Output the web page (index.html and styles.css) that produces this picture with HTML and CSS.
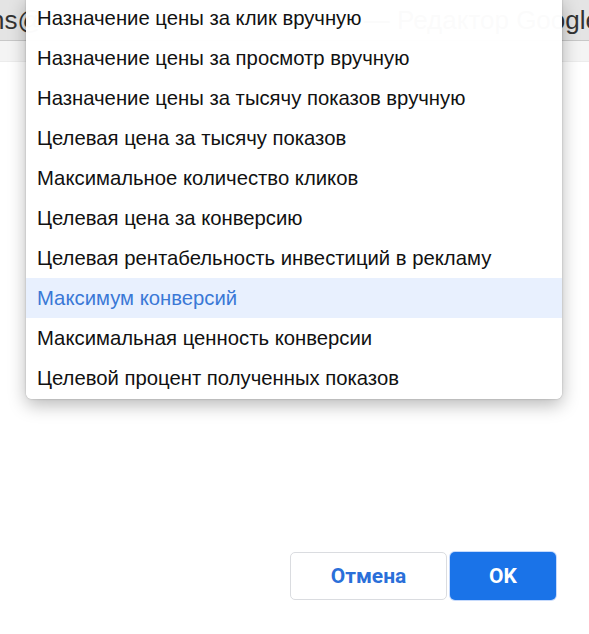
FILE: index.html
```html
<!DOCTYPE html>
<html lang="ru">
<head>
  <meta charset="UTF-8" />
  <meta name="viewport" content="width=device-width, initial-scale=1.0">
  <title>Стратегия назначения ставок</title>
  <link rel="stylesheet" href="styles.css">
</head>
<body>
  <div class="titlebar">
    <span class="title-left">ns@</span>
    <span class="title-right">— Редактор Google</span>
  </div>
  <div class="sheet"></div>

  <ul class="menu">
    <li>Назначение цены за клик вручную</li>
    <li>Назначение цены за просмотр вручную</li>
    <li>Назначение цены за тысячу показов вручную</li>
    <li>Целевая цена за тысячу показов</li>
    <li>Максимальное количество кликов</li>
    <li>Целевая цена за конверсию</li>
    <li>Целевая рентабельность инвестиций в рекламу</li>
    <li class="active">Максимум конверсий</li>
    <li>Максимальная ценность конверсии</li>
    <li>Целевой процент полученных показов</li>
  </ul>

  <div class="actions">
    <button class="btn btn-cancel">Отмена</button>
    <button class="btn btn-ok">OK</button>
  </div>
</body>
</html>
```

FILE: styles.css
```css
body { margin: 0; font-family: "Liberation Sans", Arial, sans-serif; background: #fff; color: #111; height: 634px; position: relative; overflow: hidden; }

.titlebar { height: 40px; background: #e4e4e4; border-bottom: 1px solid #c8c8c8; display: flex; align-items: center; justify-content: space-between; overflow: hidden; font-size: 26px; color: #333; white-space: nowrap; }
.title-left { margin-left: -10px; }
.title-right { margin-right: -11px; }

.sheet { height: 20px; background: #f4f4f4; border-bottom: 1px solid #ececec; }

.menu { position: absolute; left: 26px; top: -2px; width: 536px; margin: 0; padding: 0 0 1px; list-style: none; background: rgba(255,255,255,0.982); border-radius: 0 0 6px 6px; box-shadow: 0 6px 18px rgba(0,0,0,0.28), 0 0 2px rgba(0,0,0,0.25); }
.menu li { height: 40px; line-height: 40px; padding-left: 11px; font-size: 20.3px; color: #111; }
.menu li.active { background: #e8f0fe; color: #3a78d6; }

.actions { position: absolute; right: 33px; bottom: 34px; display: flex; gap: 3px; }
.btn { height: 48px; border-radius: 5px; font-family: "Roboto", "Liberation Sans", sans-serif; font-size: 21px; font-weight: bold; }
.btn-cancel { width: 157px; background: #fff; color: #2a6fd9; border: 1px solid #dadce0; }
.btn-ok { width: 106px; background: #1a73e8; color: #fff; border: none; box-shadow: 0 0 0 1px #c6dafc; }
```
